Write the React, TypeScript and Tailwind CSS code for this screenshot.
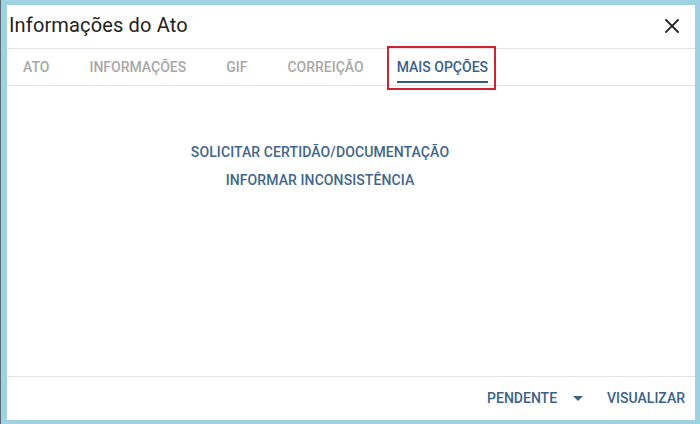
import React from "react";

const tabs = ["ATO", "INFORMAÇÕES", "GIF", "CORREIÇÃO"];

const App = () => {
  return (
    <div className="w-[700px] h-[424px] bg-[#9fd2e0] border-l-[1px] border-[#5a6a70] pl-[6px] pt-[5px] pr-[5px] pb-[4px] font-['Roboto',sans-serif]">
      <div className="h-full bg-white flex flex-col">
        {/* Header */}
        <div className="h-[44px] flex items-center justify-between pl-[2px] pr-[10px] border-b border-[#e3e3e3]">
          <h1 className="text-[20px] text-[#222] leading-none tracking-[0.15px] -mt-[3px]">Informações do Ato</h1>
          <button type="button" className="p-1 text-[#222] -mt-[2px]">
            <svg width="18" height="18" viewBox="0 0 24 24" fill="none" stroke="currentColor" strokeWidth="2.4" strokeLinecap="square">
              <path d="M4 4l16 16M20 4L4 20" />
            </svg>
          </button>
        </div>

        {/* Tabs */}
        <div className="h-[37px] flex items-stretch pl-[16px] gap-[40px] border-b border-[#e3e3e3] text-[14px] font-medium">
          {tabs.map((tab) => (
            <div key={tab} className="flex items-center text-[#a8a8a8]">
              {tab}
            </div>
          ))}
          <div className="relative flex items-center ml-[-7px] text-[#3a6188]">
            MAIS OPÇÕES
            <span className="absolute left-0 right-0 bottom-[2px] h-[2px] bg-[#2f5b82]" />
            <span className="absolute -left-[10px] -right-[8px] -top-[3px] -bottom-[5px] border-2 border-[#cf2232]" />
          </div>
        </div>

        {/* Content */}
        <div className="flex-1 flex flex-col items-center pt-[57px] pr-[62px] gap-[10px] text-[14px] font-medium text-[#3f668c]">
          <a className="leading-[18px] tracking-[0.1px]">SOLICITAR CERTIDÃO/DOCUMENTAÇÃO</a>
          <a className="leading-[18px] tracking-[0.1px]">INFORMAR INCONSISTÊNCIA</a>
        </div>

        {/* Footer */}
        <div className="h-[44px] flex items-center justify-end border-t border-[#e3e3e3] pr-[10px] text-[14px] font-medium text-[#3a6188]">
          <button type="button" className="flex items-center">
            PENDENTE
            <svg className="ml-[16px]" width="10" height="5" viewBox="0 0 10 5">
              <path d="M0 0h10L5 5z" fill="#3a6188" />
            </svg>
          </button>
          <button type="button" className="ml-[24px]">VISUALIZAR</button>
        </div>
      </div>
    </div>
  );
};

export default App;
